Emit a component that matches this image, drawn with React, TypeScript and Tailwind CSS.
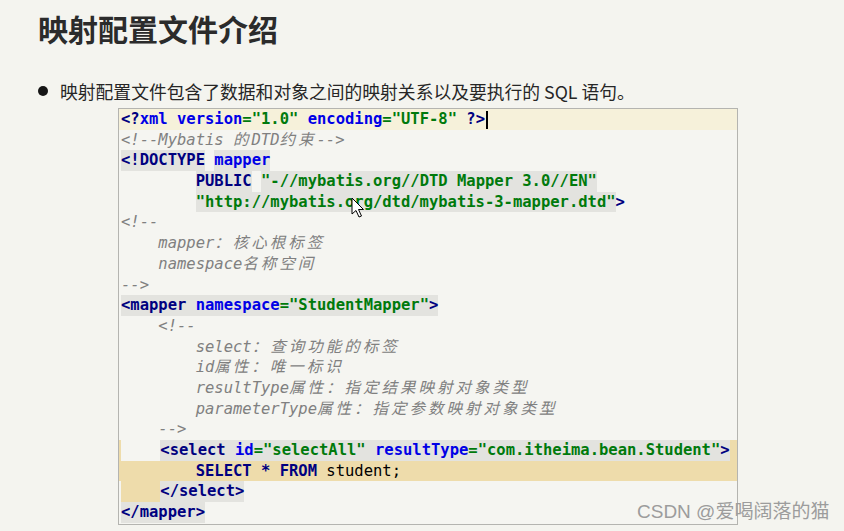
import React from "react"

const mono = "font-['DejaVu_Sans_Mono','Noto_Sans_CJK_SC',monospace]"

const Tag = ({ children }: { children: React.ReactNode }) => (
  <span className="font-bold text-[#000080]">{children}</span>
)
const Attr = ({ children }: { children: React.ReactNode }) => (
  <span className="font-bold text-[#0000e6]">{children}</span>
)
const Val = ({ children }: { children: React.ReactNode }) => (
  <span className="font-bold text-[#007a0c]">{children}</span>
)
const Cm = ({ children }: { children: React.ReactNode }) => (
  <span className="italic text-[#808080]">{children}</span>
)
// wide chars take two columns in the editor
const Zh = ({ children }: { children: React.ReactNode }) => (
  <span className="tracking-[3px]">{children}</span>
)
const Hl = ({ children }: { children: React.ReactNode }) => (
  <span className="inline-block h-[20.7px] bg-[#e3e3df] align-top">{children}</span>
)

const Line = ({
  children,
  className = "",
}: {
  children?: React.ReactNode
  className?: string
}) => (
  <div className={`h-[20.7px] whitespace-pre pl-[2px] leading-[20.7px] ${className}`}>
    {children}
  </div>
)

const Cursor = () => (
  <svg
    className="absolute left-[351px] top-[197px]"
    width="14"
    height="22"
    viewBox="0 0 14 22"
  >
    <path
      d="M1 1 L1 17 L5 13.5 L8 20 L10.5 19 L7.5 12.5 L12.5 12.5 Z"
      fill="#fff"
      stroke="#000"
      strokeWidth="1"
      strokeLinejoin="round"
    />
  </svg>
)

const App = () => {
  return (
    <div className="relative h-[531px] w-[844px] overflow-hidden bg-[#f4f4ef] pl-[38px]">
      <h1 className="h-[46px] pt-[10px] text-[30px] font-bold leading-[36px] text-[#2b2b2b] font-['Noto_Sans_CJK_SC',sans-serif]">
        映射配置文件介绍
      </h1>
      <div className="mt-[33px] flex h-[24px] items-center gap-[12px]">
        <span className="h-[10px] w-[10px] rounded-full bg-[#151515]" />
        <p className="text-[17.8px] leading-[24px] text-[#262626] font-['Noto_Sans_CJK_SC',sans-serif]">
          映射配置文件包含了数据和对象之间的映射关系以及要执行的 SQL 语句。
        </p>
      </div>

      <div
        className={`ml-[80px] mt-[5px] w-[620px] border border-[#b4b4b0] bg-[#f5f5f1] pb-[1px] text-[15.5px] text-black ${mono}`}
      >
        <Line className="bg-[#f6f1da]">
          <Tag>{"<?"}</Tag>
          <Attr>xml</Attr> <Attr>version</Attr>
          <Val>{'="1.0"'}</Val> <Attr>encoding</Attr>
          <Val>{'="UTF-8"'}</Val> <Tag>{"?>"}</Tag>
          <span className="ml-[1px] inline-block h-[18px] w-[2px] bg-black align-middle" />
        </Line>
        <Line>
          <Cm>
            {"<!--Mybatis "}
            <Zh>的</Zh>DTD<Zh>约束</Zh>
            {"-->"}
          </Cm>
        </Line>
        <Line>
          <Hl>
            <Tag>{"<!DOCTYPE"}</Tag>
          </Hl>{" "}
          <Hl>
            <Attr>mapper</Attr>
          </Hl>
        </Line>
        <Line>
          {"        "}
          <Hl>
            <Tag>PUBLIC</Tag>
          </Hl>{" "}
          <Hl>
            <Val>{'"-//mybatis.org//DTD Mapper 3.0//EN"'}</Val>
          </Hl>
        </Line>
        <Line>
          {"        "}
          <Hl>
            <Val>{'"http://mybatis.org/dtd/mybatis-3-mapper.dtd"'}</Val>
          </Hl>
          <Tag>{">"}</Tag>
        </Line>
        <Line>
          <Cm>{"<!--"}</Cm>
        </Line>
        <Line>
          <Cm>
            {"    mapper"}
            <Zh>：核心根标签</Zh>
          </Cm>
        </Line>
        <Line>
          <Cm>
            {"    namespace"}
            <Zh>名称空间</Zh>
          </Cm>
        </Line>
        <Line>
          <Cm>{"-->"}</Cm>
        </Line>
        <Line>
          <Hl>
            <Tag>{"<mapper"}</Tag> <Attr>namespace</Attr>
            <Val>{'="StudentMapper"'}</Val>
            <Tag>{">"}</Tag>
          </Hl>
        </Line>
        <Line>
          <Cm>{"    <!--"}</Cm>
        </Line>
        <Line>
          <Cm>
            {"        select"}
            <Zh>：查询功能的标签</Zh>
          </Cm>
        </Line>
        <Line>
          <Cm>
            {"        id"}
            <Zh>属性：唯一标识</Zh>
          </Cm>
        </Line>
        <Line>
          <Cm>
            {"        resultType"}
            <Zh>属性：指定结果映射对象类型</Zh>
          </Cm>
        </Line>
        <Line>
          <Cm>
            {"        parameterType"}
            <Zh>属性：指定参数映射对象类型</Zh>
          </Cm>
        </Line>
        <Line>
          <Cm>{"    -->"}</Cm>
        </Line>
        <Line className="bg-[#eedcab] pl-0">
          <span className="inline-block h-[20.7px] bg-[#f5f5f1] pl-[2px] align-top">{"    "}</span>
          <Hl>
            <Tag>{"<select"}</Tag> <Attr>id</Attr>
            <Val>{'="selectAll"'}</Val> <Attr>resultType</Attr>
            <Val>{'="com.itheima.bean.Student"'}</Val>
            <Tag>{">"}</Tag>
          </Hl>
        </Line>
        <Line className="bg-[#eedcab]">
          {"        "}
          <Tag>SELECT * FROM</Tag>
          {" student;"}
        </Line>
        <Line className="pl-0">
          <span className="inline-block h-[20.7px] bg-[#eedcab] pl-[2px] align-top">{"    "}</span>
          <Hl>
            <Tag>{"</select>"}</Tag>
          </Hl>
        </Line>
        <Line>
          <Hl>
            <Tag>{"</mapper>"}</Tag>
          </Hl>
        </Line>
      </div>

      <Cursor />

      <div className="absolute left-[637px] top-[499px] text-[19px] leading-[26px] text-[#9c9c9c] font-['Liberation_Sans','Noto_Sans_CJK_SC',sans-serif]">
        CSDN @爱喝阔落的猫
      </div>
    </div>
  )
}

export default App
